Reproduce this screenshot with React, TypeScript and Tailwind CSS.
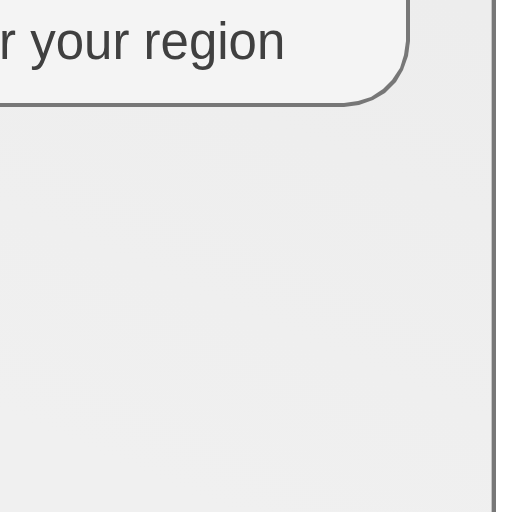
export default function App() {
  return (
    <div className="h-screen overflow-hidden bg-white pr-4 font-['Liberation_Sans',Arial,sans-serif]">
      <main className="h-full border-r-4 border-[#777777] bg-[linear-gradient(24deg,#f0f0f0_92px,#ededed_652px)] pr-[82px] shadow-[inset_-1px_0_#c4c4c4]">
        {/* The card corner is faceted: an outline polygon around a fill polygon. */}
        <section className="bg-[#777777] pr-1 pb-1 [clip-path:polygon(0_0,100%_0,calc(100%_-_0px)_calc(100%_-_66px),calc(100%_-_2px)_calc(100%_-_51px),calc(100%_-_7px)_calc(100%_-_37px),calc(100%_-_14px)_calc(100%_-_25px),calc(100%_-_25px)_calc(100%_-_14px),calc(100%_-_37px)_calc(100%_-_7px),calc(100%_-_51px)_calc(100%_-_2px),calc(100%_-_66px)_calc(100%_-_0px),0_100%)]">
          <div className="bg-[#f4f4f4] pt-3 pb-8 [clip-path:polygon(0_0,100%_0,calc(100%_-_0px)_calc(100%_-_62px),calc(100%_-_2px)_calc(100%_-_48px),calc(100%_-_6px)_calc(100%_-_35px),calc(100%_-_14px)_calc(100%_-_23px),calc(100%_-_23px)_calc(100%_-_14px),calc(100%_-_35px)_calc(100%_-_6px),calc(100%_-_48px)_calc(100%_-_2px),calc(100%_-_62px)_calc(100%_-_0px),0_100%)]">
            <p className="-ml-px text-[51px] leading-[59px] whitespace-nowrap text-[#404040]">r your region</p>
          </div>
        </section>
      </main>
    </div>
  );
}
